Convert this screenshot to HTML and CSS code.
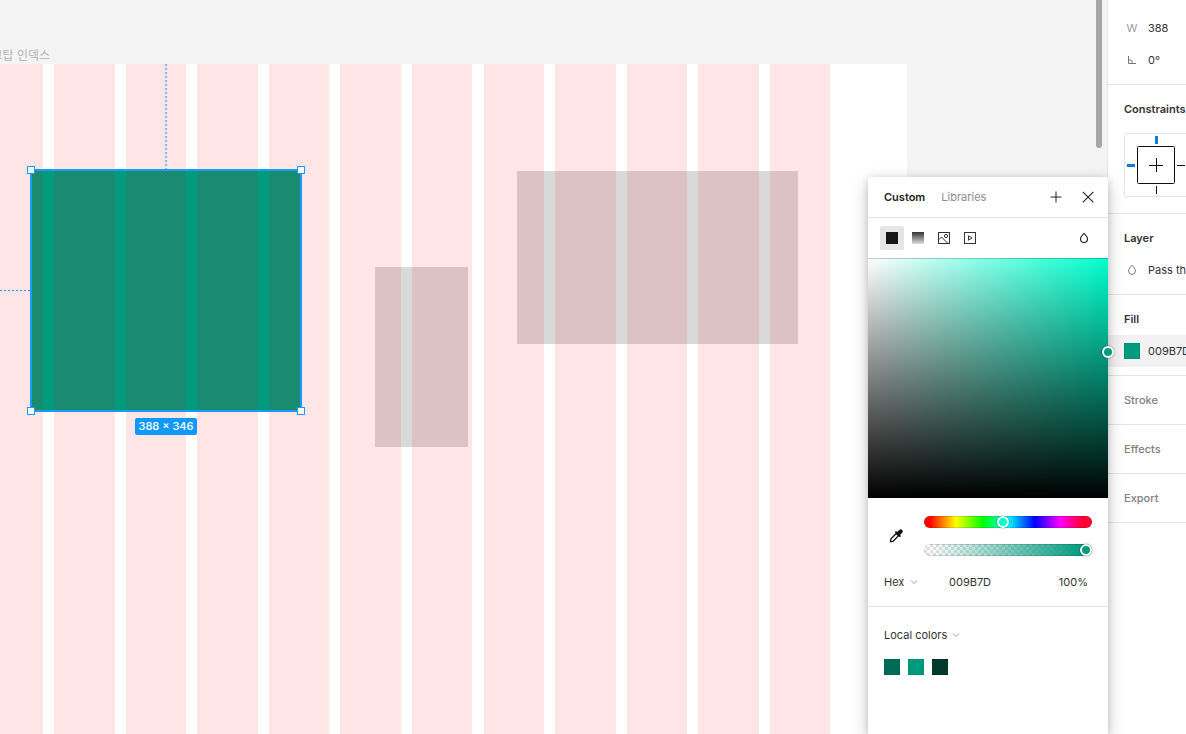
FILE: index.html
```html
<!DOCTYPE html>
<html lang="en">
<head>
<meta charset="utf-8">
<title>Design editor</title>
<link rel="stylesheet" href="styles.css">
</head>
<body>
<div class="app">
  <main class="canvas">
    <span class="frame-name" lang="ko">데스크탑 인덱스</span>
    <div class="frame">
      <div class="shape shape-selected"></div>
      <div class="shape shape-small"></div>
      <div class="shape shape-wide"></div>
      <div class="layout-grid">
        <div class="tracks"><i></i><i></i><i></i><i></i><i></i><i></i><i></i></div>
        <div class="tracks"><i></i><i></i><i></i><i></i><i></i></div>
      </div>
    </div>
    <div class="guide guide-v"></div>
    <div class="guide guide-h"></div>
    <div class="selection">
      <span class="handle nw"></span><span class="handle ne"></span>
      <span class="handle sw"></span><span class="handle se"></span>
      <span class="size">388 × 346</span>
    </div>
    <div class="scrollbar"></div>
  </main>

  <aside class="inspector">
    <section class="group geometry">
      <label class="row"><span class="icon muted">W</span><input class="field" type="text" value="388"></label>
      <label class="row"><span class="icon"><svg width="16" height="16" viewBox="0 0 16 16" fill="none" stroke="#777" aria-label="Rotation"><path d="M4.500 4v7.500H12M4.500 7.500A4 4 0 0 1 8.500 11.500"/></svg></span><input class="field" type="text" value="0°"></label>
    </section>
    <section class="group constraints">
      <h2 class="title">Constraints</h2>
      <div class="constraint-box">
        <svg width="62" height="62" viewBox="0 0 62 62" fill="none" stroke="#111">
          <rect x="12.500" y="12.500" width="37" height="37" rx="1"/>
          <path d="M31.500 24v14M24 31.500h14M31.500 52v8M52 31.500h8"/>
          <path d="M31.500 2v8M2 31.500h8" stroke="#0d7de0" stroke-width="3"/>
        </svg>
      </div>
    </section>
    <section class="group">
      <h2 class="title">Layer</h2>
      <div class="row"><span class="icon"><svg width="16" height="16" viewBox="0 0 16 16" fill="none" stroke="#777"><path d="M8 3.200C6.200 5.200 4.600 6.800 4.600 9a3.400 3.400 0 0 0 6.800 0C11.400 6.800 9.800 5.200 8 3.200z"/></svg></span><button class="text-button" type="button">Pass through</button></div>
    </section>
    <section class="group">
      <h2 class="title">Fill</h2>
      <div class="row active"><button class="swatch teal" type="button" aria-label="Fill color"></button><input class="field" type="text" value="009B7D" aria-label="Fill hex"></div>
    </section>
    <section class="group"><h2 class="title off">Stroke</h2></section>
    <section class="group"><h2 class="title off">Effects</h2></section>
    <section class="group"><h2 class="title off">Export</h2></section>
  </aside>

  <section class="picker" aria-label="Color picker">
    <header class="picker-head">
      <button class="tab current" type="button">Custom</button>
      <button class="tab" type="button">Libraries</button>
      <button class="tool push" type="button" aria-label="Add style"><svg width="24" height="24" viewBox="0 0 24 24" fill="none" stroke="#222"><path d="M12 6.500v11M6.500 12h11"/></svg></button>
      <button class="tool close" type="button" aria-label="Close"><svg width="24" height="24" viewBox="0 0 24 24" fill="none" stroke="#222" stroke-width="1.100"><path d="M6.800 6.800l10.600 10.600M17.400 6.800L6.800 17.400"/></svg></button>
    </header>
    <div class="picker-types">
      <button class="tool chosen" type="button" aria-label="Solid"><svg width="24" height="24"><path d="M6 6h12v12H6z" fill="#151515"/></svg></button>
      <button class="tool" type="button" aria-label="Gradient"><svg width="24" height="24"><defs><linearGradient id="fade" x2="0" y2="1"><stop stop-color="#333"/><stop offset="1" stop-color="#ddd"/></linearGradient></defs><path d="M6 6h12v12H6z" fill="url(#fade)"/></svg></button>
      <button class="tool" type="button" aria-label="Image"><svg width="24" height="24" fill="none" stroke="#333"><rect x="6.500" y="6.500" width="11" height="11"/><circle cx="14" cy="10" r="1.600"/><path d="M7 13.500l2.500-2.500 6.500 6.500"/></svg></button>
      <button class="tool" type="button" aria-label="Video"><svg width="24" height="24" fill="none" stroke="#333"><rect x="6.500" y="6.500" width="11" height="11"/><path d="M10.500 9.800v4.400l3.500-2.200z"/></svg></button>
      <button class="tool push" type="button" aria-label="Blend mode"><svg width="24" height="24" fill="none" stroke="#222" stroke-width="1.100"><path d="M12 7.500C10.200 9.300 8.500 10.900 8.500 13a3.500 3.500 0 0 0 7 0C15.500 10.900 13.800 9.300 12 7.500z"/></svg></button>
    </div>
    <div class="shade"><span class="shade-knob"></span></div>
    <div class="sliders">
      <button class="tool" type="button" aria-label="Pick a color"><svg width="24" height="24" viewBox="0 0 24 24"><path d="M12.200 9.500l2.300 2.300-5.300 5.400-2.200.600-.6-.6.600-2.300z" fill="#fff" stroke="#111" stroke-width="1.300"/><path d="M10.800 8.200l1.200-1.200 1.100 1.100 2.200-2.200a2 2 0 0 1 2.900 2.900L16 11l1.100 1.100-1.200 1.200z" fill="#111"/></svg></button>
      <div class="tracks-stack">
        <input class="slider hue" type="range" min="0" max="360" value="168" aria-label="Hue">
        <input class="slider alpha" type="range" min="0" max="100" value="100" aria-label="Opacity">
      </div>
    </div>
    <div class="values">
      <div class="mode"><select aria-label="Color format"><option>Hex</option></select><svg class="chevron" width="8" height="8" fill="none" stroke="#999"><path d="M1 2.500l3 3 3-3"/></svg></div>
      <input class="hex" type="text" value="009B7D" aria-label="Hex value">
      <input class="percent" type="text" value="100%" aria-label="Opacity value">
    </div>
    <div class="library">
      <button class="library-name" type="button">Local colors<svg class="chevron" width="8" height="8" fill="none" stroke="#999"><path d="M1 2.500l3 3 3-3"/></svg></button>
      <div class="swatches">
        <button class="swatch pine" type="button" aria-label="006C57"></button>
        <button class="swatch teal" type="button" aria-label="009B7D"></button>
        <button class="swatch deep" type="button" aria-label="003A2F"></button>
      </div>
    </div>
  </section>
</div>
</body>
</html>
```
FILE: styles.css
```css
* { box-sizing: border-box; }
body {
  margin: 0;
  font: 11px/16px Inter, "Noto Sans CJK KR", sans-serif;
  color: #333;
}
button, input, select {
  font: inherit;
  color: inherit;
  border: 0;
  padding: 0;
  margin: 0;
  background: none;
  appearance: none;
  min-width: 0;
}
svg { display: block; }
.app { position: relative; display: flex; height: 100vh; overflow: hidden; }

/* Canvas */
.canvas { position: relative; flex: 1; overflow: hidden; background: #f4f4f4; }
.frame-name {
  position: absolute;
  left: -50px;
  top: 48px;
  width: 100px;
  font-size: 12px;
  text-align: right;
  white-space: nowrap;
  color: #b3b3b3;
}
.frame { position: absolute; left: -94px; top: 64px; bottom: 0; width: 1001px; background: #fff; overflow: hidden; }
.shape { position: absolute; background: #d9d9d9; }
.shape-selected { left: 125px; top: 106px; width: 270px; height: 241px; background: #009b7d; }
.shape-small { left: 469px; top: 203px; width: 93px; height: 180px; }
.shape-wide { left: 611px; top: 107px; width: 281px; height: 173px; }
.layout-grid { position: absolute; top: 0; bottom: 0; left: 77px; display: flex; gap: 12px; }
.tracks { display: flex; gap: 11px; }
.tracks i { width: 60px; background: rgba(255, 0, 0, 0.1); }
.tracks i:nth-child(even) { width: 61px; }
.guide { position: absolute; }
.guide-v { left: 165px; top: 64px; width: 2px; height: 105px; background: repeating-linear-gradient(#7dbcf8 0 2px, transparent 2px 4px); }
.guide-h { left: 0; top: 290px; width: 30px; height: 1px; background: repeating-linear-gradient(90deg, #1a9bff 0 2px, transparent 2px 4px); }
.selection { position: absolute; left: 30px; top: 169px; width: 272px; height: 243px; border: 2px solid #1a9bff; }
.handle { position: absolute; width: 8px; height: 8px; background: #fff; border: 1px solid #1a9bff; }
.nw { left: -5px; top: -5px; }
.ne { right: -5px; top: -5px; }
.sw { left: -5px; bottom: -5px; }
.se { right: -5px; bottom: -5px; }
.size {
  position: absolute;
  top: 247px;
  left: 103px;
  width: 62px;
  line-height: 17px;
  border-radius: 2px;
  background: #0d99ff;
  color: #fff;
  font-weight: 500;
  text-align: center;
  white-space: nowrap;
}
.scrollbar { position: absolute; right: 5px; top: -20px; width: 6px; height: 168px; border-radius: 3px; background: #a6a6a6; }

/* Inspector */
.inspector { width: 79px; border-left: 1px solid #e5e5e5; background: #fff; overflow: hidden; }
.group { padding: 8px 0; border-bottom: 1px solid #e5e5e5; }
.geometry { padding-top: 12px; }
.title { margin: 0; padding-left: 16px; font-size: 11px; font-weight: 600; line-height: 32px; white-space: nowrap; }
.off { font-weight: 500; color: #808080; }
.row { display: flex; align-items: center; gap: 8px; height: 32px; padding-left: 16px; }
.active { background: #f2f2f2; }
.icon { flex: none; width: 16px; text-align: center; }
.muted { color: #999; }
.field { width: 60px; flex: none; }
.text-button { white-space: nowrap; }
.constraints { padding-bottom: 16px; }
.constraint-box { width: 96px; margin: 8px 0 0 16px; border: 1px solid #e5e5e5; border-radius: 2px; }
.swatch { flex: none; width: 16px; height: 16px; box-shadow: inset 0 0 0 1px rgba(0, 0, 0, 0.06); }
.teal { background: #009b7d; }
.pine { background: #006c57; }
.deep { background: #003a2f; }

/* Color picker */
.picker {
  position: absolute;
  top: 177px;
  right: 78px;
  bottom: 0;
  width: 240px;
  background: #fff;
  border-radius: 2px 2px 0 0;
  box-shadow: 0 5px 17px rgba(0, 0, 0, 0.2), 0 2px 7px rgba(0, 0, 0, 0.15);
}
.picker-head { display: flex; align-items: center; height: 41px; padding: 0 8px 0 16px; border-bottom: 1px solid #e5e5e5; }
.tab { margin-right: 16px; color: #8c8c8c; }
.current { color: #222; font-weight: 600; }
.tool { flex: none; width: 24px; height: 24px; border-radius: 2px; }
.push { margin-left: auto; }
.close { margin-left: 8px; }
.picker-types { display: flex; align-items: center; gap: 2px; height: 40px; padding: 0 12px; }
.chosen { background: #e5e5e5; }
.shade {
  position: relative;
  height: 240px;
  background: linear-gradient(transparent, #000), linear-gradient(90deg, #fff, #00ffce);
  box-shadow: inset 0 1px 0 rgba(0, 0, 0, 0.2);
}
.shade-knob {
  position: absolute;
  right: -6px;
  top: 88px;
  width: 12px;
  height: 12px;
  border: 2px solid #fff;
  border-radius: 50%;
  background: #009b7d;
  box-shadow: 0 0 2px rgba(0, 0, 0, 0.5);
}
.sliders { display: flex; align-items: center; gap: 16px; padding: 18px 16px 10px; }
.tracks-stack { flex: 1; display: grid; gap: 16px; }
.slider { width: 100%; height: 12px; border-radius: 6px; box-shadow: inset 0 0 0 1px rgba(0, 0, 0, 0.12); }
.hue { background: linear-gradient(90deg, #f00 6px, #ff0 19%, #0f0 35%, #0ff 50%, #00f 66%, #f0f 81%, #f03 94%); }
.alpha {
  background:
    linear-gradient(90deg, transparent 6px, #009b7d 96%),
    repeating-conic-gradient(#fff 0 25%, #e1e1e1 0 50%) 0 0 / 6px 6px;
}
.slider::-webkit-slider-thumb {
  appearance: none;
  width: 12px;
  height: 12px;
  border: 2px solid #fff;
  border-radius: 50%;
  box-shadow: 0 0 2px rgba(0, 0, 0, 0.5);
}
.hue::-webkit-slider-thumb { background: #00ffce; }
.alpha::-webkit-slider-thumb { background: #009b7d; }
.values { display: flex; align-items: center; height: 41px; padding: 0 20px 8px 16px; border-bottom: 1px solid #e5e5e5; }
.mode { display: flex; align-items: center; gap: 5px; width: 65px; }
.hex { flex: 1; }
.percent { width: 48px; text-align: right; }
.library { padding: 12px 16px; }
.library-name { display: flex; align-items: center; gap: 5px; height: 32px; }
.swatches { display: flex; gap: 8px; margin-top: 8px; }
```
